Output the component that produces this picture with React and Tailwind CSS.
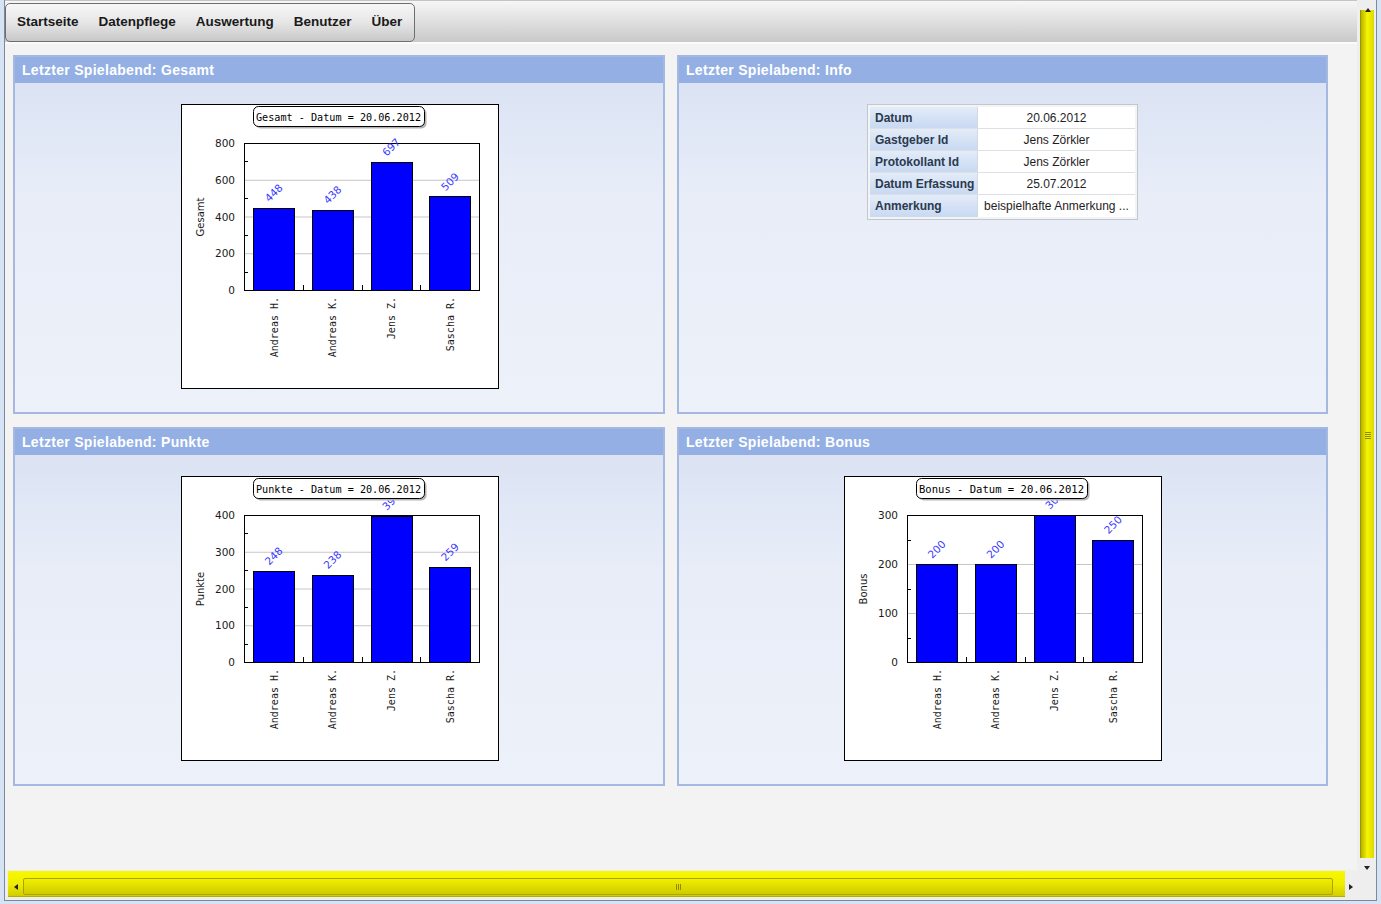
import React from "react";

const NAMES = ["Andreas H.", "Andreas K.", "Jens Z.", "Sascha R."];

function BarChart({ title, yLabel, max, major, minor, values }) {
  const L = 62, R = 297, T = 38, B = 185;
  const H = B - T, W = R - L, cw = W / 4;
  const y = (v) => B - (v / max) * H;
  const majors = [];
  for (let v = 0; v <= max; v += major) majors.push(v);
  const minors = [];
  for (let v = minor; v < max; v += major) minors.push(v);
  return (
    <div className="w-[318px] h-[285px] border border-black bg-white shrink-0 ml-[1px]">
      <svg width="316" height="283" viewBox="0 0 316 283">
        {majors.filter((v) => v > 0 && v < max).map((v) => (
          <line key={"g" + v} x1={L} x2={R} y1={y(v) + 0.5} y2={y(v) + 0.5} stroke="#c6c6c6" strokeWidth="1" />
        ))}
        {minors.map((v) => (
          <line key={"m" + v} x1={L} x2={L + 4} y1={Math.round(y(v)) + 0.5} y2={Math.round(y(v)) + 0.5} stroke="#000" strokeWidth="1" />
        ))}
        {values.map((v, i) => {
          const top = Math.max(y(v), T);
          return (
            <rect key={"b" + i} x={Math.round(L + cw * i + 9) + 0.5} y={Math.round(top) + 0.5} width="41" height={B - Math.round(top)} fill="#0000ff" stroke="#000" strokeWidth="1" />
          );
        })}
        <rect x={L + 0.5} y={T + 0.5} width={W} height={H} fill="none" stroke="#000" strokeWidth="1" />
        {[1, 2, 3].map((k) => (
          <line key={"c" + k} x1={Math.round(L + cw * k) + 0.5} x2={Math.round(L + cw * k) + 0.5} y1={B} y2={B - 5} stroke="#000" strokeWidth="1" />
        ))}
        {majors.map((v) => (
          <text key={"t" + v} x="53" y={y(v) + 4} textAnchor="end" fontFamily="'DejaVu Sans', sans-serif" fontSize="10.5" fill="#1a1a1a">
            {v}
          </text>
        ))}
        <text x="22" y="112" transform="rotate(-90 22 112)" textAnchor="middle" fontFamily="'DejaVu Sans', sans-serif" fontSize="10" fill="#1a1a1a">
          {yLabel}
        </text>
        {NAMES.map((n, i) => {
          const cx = L + cw * i + 9 + 20.5;
          return (
            <text key={"x" + i} x={cx + 4} y="192" transform={`rotate(-90 ${cx + 4} 192)`} textAnchor="end" fontFamily="'DejaVu Sans Mono', monospace" fontSize="10" fill="#1a1a1a">
              {n}
            </text>
          );
        })}
        {values.map((v, i) => {
          const cx = L + cw * i + 9 + 20.5;
          const cy = y(v) - 15;
          return (
            <text key={"v" + i} x={cx} y={cy} dy="4" transform={`rotate(-45 ${cx} ${cy})`} textAnchor="middle" fontFamily="'DejaVu Sans', sans-serif" fontSize="10.5" fill="#3a3aff">
              {v}
            </text>
          );
        })}
        <rect x="73.5" y="3.5" width="171" height="20" rx="5" fill="#b4b4b4" />
        <rect x="71.5" y="1.5" width="171" height="20" rx="5" fill="#fff" stroke="#000" strokeWidth="1" />
        <text x="74" y="15.5" fontFamily="'DejaVu Sans Mono', monospace" fontSize="11" textLength="165" lengthAdjust="spacingAndGlyphs" fill="#000">
          {title}
        </text>
      </svg>
    </div>
  );
}

function Panel({ title, children }) {
  return (
    <div className="h-[359px] border-2 border-[#a4b8e2] flex flex-col bg-[linear-gradient(to_bottom,#d8e1f3,#e8edf8_40%,#edf1f9)]">
      <div className="h-[26px] bg-[#93afe4] flex items-center pl-[7px] text-white font-bold text-[14px] tracking-[0.3px] shrink-0" style={{ fontFamily: "'Liberation Sans', Arial, sans-serif" }}>
        {title}
      </div>
      <div className="flex-1 flex justify-center pt-[21px]">{children}</div>
    </div>
  );
}

function InfoTable() {
  const rows = [
    ["Datum", "20.06.2012"],
    ["Gastgeber Id", "Jens Zörkler"],
    ["Protokollant Id", "Jens Zörkler"],
    ["Datum Erfassung", "25.07.2012"],
    ["Anmerkung", "beispielhafte Anmerkung ..."],
  ];
  return (
    <div className="w-[271px] h-[116px] border border-[#c2c7ce] bg-[#f3f4f6] p-[2px] shrink-0 self-start" style={{ fontFamily: "'Liberation Sans', Arial, sans-serif" }}>
      <div className="flex flex-col bg-white">
        {rows.map(([k, v], i) => (
          <div key={k} className={"flex h-[22px] " + (i < rows.length - 1 ? "border-b border-[#dcdfe4]" : "")}>
            <div className="w-[108px] border-r border-[#d2d9e3] bg-gradient-to-b from-[#e3ecf9] to-[#c8d9f1] pl-[5px] flex items-center text-[12px] font-bold text-[#2b3a4e]">
              {k}
            </div>
            <div className="flex-1 flex items-center justify-center text-[12px] text-[#1e1e1e] whitespace-nowrap">{v}</div>
          </div>
        ))}
      </div>
    </div>
  );
}

function TriUp() {
  return <div className="w-0 h-0 border-l-[3px] border-r-[3px] border-b-[4px] border-l-transparent border-r-transparent border-b-[#222]" />;
}
function TriDown() {
  return <div className="w-0 h-0 border-l-[3px] border-r-[3px] border-t-[4px] border-l-transparent border-r-transparent border-t-[#222]" />;
}
function TriLeft() {
  return <div className="w-0 h-0 border-t-[3px] border-b-[3px] border-r-[4px] border-t-transparent border-b-transparent border-r-[#222]" />;
}
function TriRight() {
  return <div className="w-0 h-0 border-t-[3px] border-b-[3px] border-l-[4px] border-t-transparent border-b-transparent border-l-[#222]" />;
}

export default function App() {
  const menu = ["Startseite", "Datenpflege", "Auswertung", "Benutzer", "Über"];
  return (
    <div className="w-[1381px] h-[904px] bg-[#d5e3f4] overflow-hidden">
      <div className="ml-[4px] w-[1373px] h-[901px] border-l border-r border-b border-[#7d8898] flex flex-col bg-[#f3f3f3]">
        <div className="h-[870px] flex">
          <div className="w-[1352px] flex flex-col">
            <div className="h-[42px] border-t border-[#c4c4c4] bg-gradient-to-b from-[#f6f6f6] to-[#c9c9c9] relative shrink-0">
              <div className="absolute left-0 top-[2px] w-[410px] h-[39px] rounded-[5px] border border-[#6e6e6e] bg-gradient-to-b from-[#f7f7f7] via-[#e6e6e6] to-[#c8c8c8] flex items-center pl-px" style={{ fontFamily: "'Liberation Sans', Arial, sans-serif" }}>
                {menu.map((m) => (
                  <div key={m} className="px-[10px] text-[13.5px] font-bold text-[#1a1a1a]">
                    {m}
                  </div>
                ))}
              </div>
            </div>
            <div className="h-[2px] bg-[#fbfbfb] shrink-0" />
            <div className="flex-1 pl-[8px] pt-[11px]">
              <div className="grid grid-cols-[652px_651px] gap-x-[12px] gap-y-[13px]">
                <Panel title="Letzter Spielabend: Gesamt">
                  <BarChart title="Gesamt - Datum = 20.06.2012" yLabel="Gesamt" max={800} major={200} minor={100} values={[448, 438, 697, 509]} />
                </Panel>
                <Panel title="Letzter Spielabend: Info">
                  <InfoTable />
                </Panel>
                <Panel title="Letzter Spielabend: Punkte">
                  <BarChart title="Punkte - Datum = 20.06.2012" yLabel="Punkte" max={400} major={100} minor={50} values={[248, 238, 397, 259]} />
                </Panel>
                <Panel title="Letzter Spielabend: Bonus">
                  <BarChart title="Bonus - Datum = 20.06.2012" yLabel="Bonus" max={300} major={100} minor={50} values={[200, 200, 300, 250]} />
                </Panel>
              </div>
            </div>
          </div>
          <div className="w-[19px] bg-[#eeeeee] flex flex-col pt-[10px]">
            <div className="relative w-[14px] h-[850px] ml-[3px] bg-gradient-to-r from-[#b9b400] via-[#f6f600] to-[#dcd800] border-l border-[#9c9700] flex flex-col items-center">
              <div className="mt-[-2px]">
                <TriUp />
              </div>
              <div className="flex-1 flex flex-col items-center justify-center gap-[1px]">
                <div className="w-[6px] h-px bg-[#8f8a00]" />
                <div className="w-[6px] h-px bg-[#8f8a00]" />
                <div className="w-[6px] h-px bg-[#8f8a00]" />
                <div className="w-[6px] h-px bg-[#8f8a00]" />
              </div>
            </div>
            <div className="mt-[8px] ml-[7px]">
              <TriDown />
            </div>
          </div>
        </div>
        <div className="h-[30px] flex bg-[#eeeeee]">
          <div className="ml-[3px] mt-[1px] w-[1337px] h-[26px] bg-gradient-to-b from-[#f8f800] via-[#f0ee00] to-[#d2cd00] flex items-end pb-[1px] border-b border-[#b3ae00]">
            <div className="w-[15px] h-[17px] flex items-center justify-center">
              <TriLeft />
            </div>
            <div className="w-[1310px] h-[17px] border border-[#a9a400] rounded-[2px] bg-gradient-to-b from-[#f0ef00] to-[#d0cb00] flex items-center justify-center gap-[1px]">
              <div className="w-px h-[6px] bg-[#8f8a00]" />
              <div className="w-px h-[6px] bg-[#8f8a00]" />
              <div className="w-px h-[6px] bg-[#8f8a00]" />
            </div>
          </div>
          <div className="w-[12px] flex items-center justify-center pt-[4px]">
            <TriRight />
          </div>
        </div>
      </div>
    </div>
  );
}
